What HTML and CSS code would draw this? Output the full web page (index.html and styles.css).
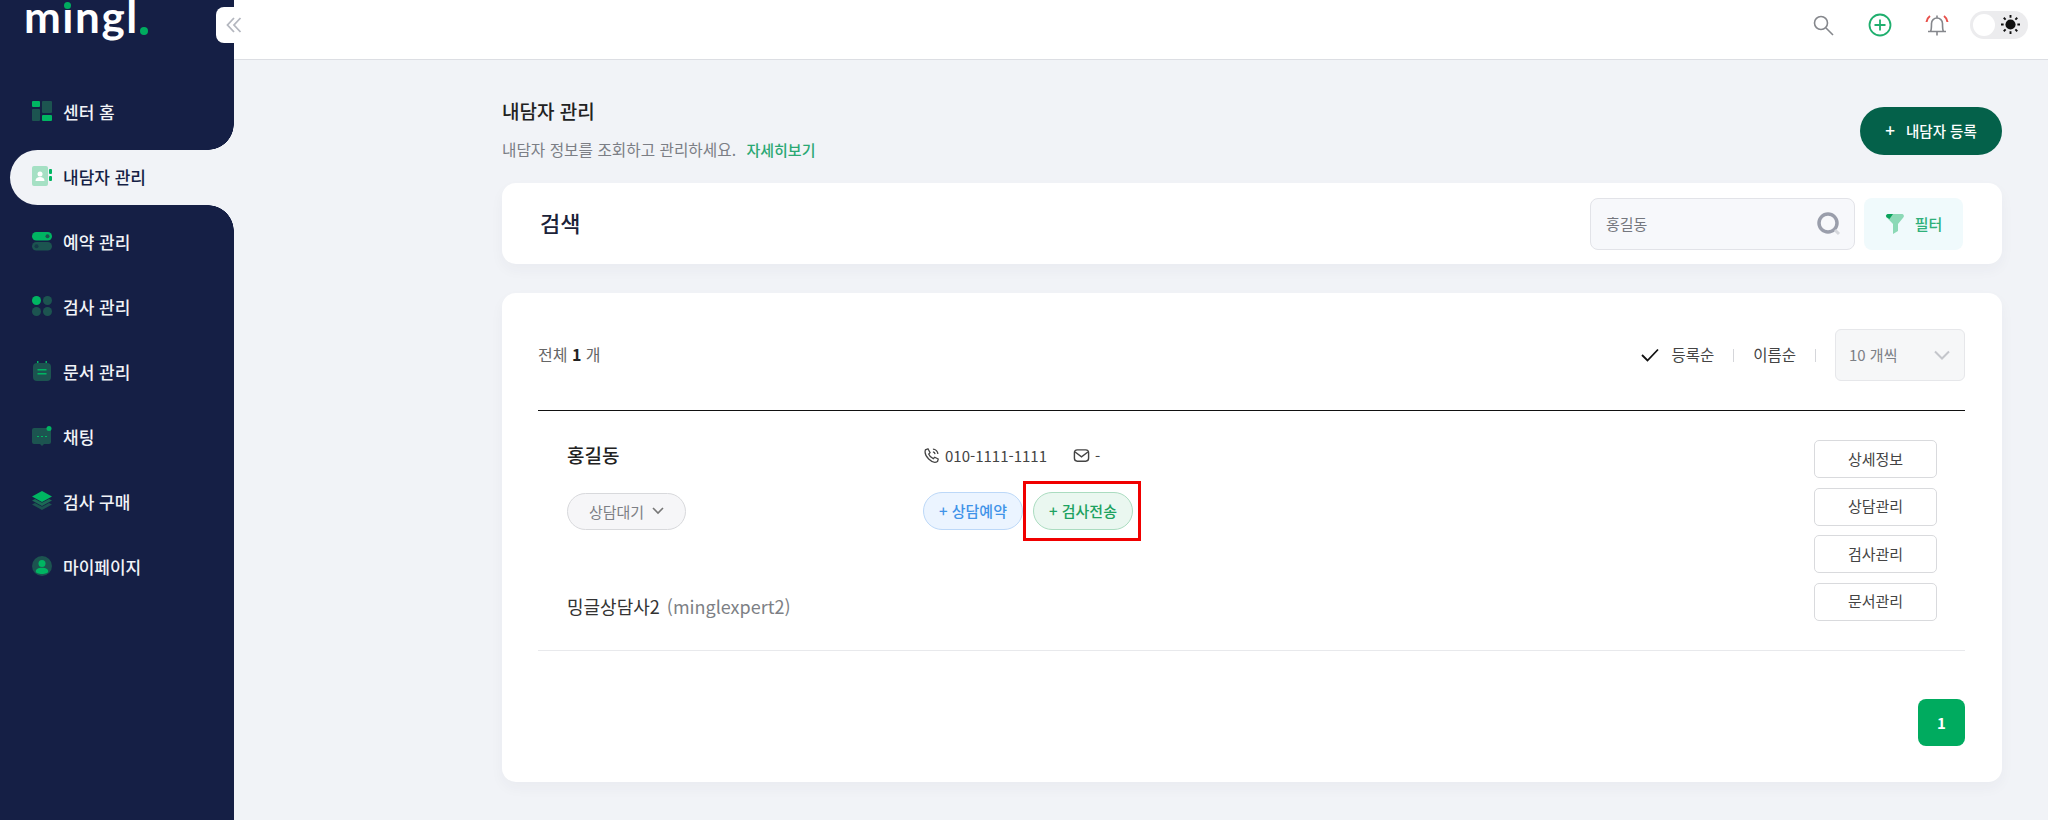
FILE: index.html
```html
<!DOCTYPE html>
<html lang="ko">
<head>
  <meta charset="UTF-8">
  <title>내담자 관리 - mingl</title>
  <link rel="stylesheet" href="styles.css">
</head>
<body>
  <div class="app">
    <aside class="sidebar">
      <div class="logo"><span>m</span><span class="logo-i">ı</span><span>ngl</span><span class="logo-dot"></span></div>
      <button class="collapse" aria-label="메뉴 접기">
        <svg width="18" height="18" viewBox="0 0 18 18" fill="none" stroke="#b4b7bf" stroke-width="1.8"><path d="M9 2 2.500 9 9 16M15.500 2 9 9l6.500 7"/></svg>
      </button>
      <nav class="nav">
        <a class="nav-item">
          <svg class="nav-icon" viewBox="0 0 20 20"><rect x="0" y="0" width="8" height="6" rx="1" fill="#00b562"/><rect x="10" y="0" width="10" height="12" rx="1" fill="#1c5450"/><rect x="0" y="8" width="8" height="12" rx="1" fill="#1c5450"/><rect x="10" y="14" width="10" height="6" rx="1" fill="#00b562"/></svg>
          센터 홈
        </a>
        <a class="nav-item active">
          <svg class="nav-icon" viewBox="0 0 20 20"><rect x="0" y="0" width="16" height="20" rx="2" fill="#a5e0c4"/><circle cx="8" cy="8" r="2.500" fill="#fff"/><path d="M3.500 15c0-3 2-4 4.500-4s4.500 1 4.500 4z" fill="#fff"/><rect x="17" y="3" width="3" height="5" rx="1" fill="#00b562"/><rect x="17" y="10" width="3" height="5" rx="1" fill="#00b562"/></svg>
          내담자 관리
        </a>
        <a class="nav-item">
          <svg class="nav-icon" viewBox="0 0 20 20"><rect x="0" y="1" width="20" height="8.500" rx="4.250" fill="#00b562"/><circle cx="15.500" cy="5.250" r="2" fill="#1c5450"/><rect x="0" y="11" width="20" height="8.500" rx="4.250" fill="#1c5450"/><circle cx="4.500" cy="15.250" r="2" fill="#153a48"/></svg>
          예약 관리
        </a>
        <a class="nav-item">
          <svg class="nav-icon" viewBox="0 0 20 20"><circle cx="4.500" cy="4.500" r="4.500" fill="#00b562"/><circle cx="15.500" cy="4.500" r="4.500" fill="#1c5450"/><circle cx="4.500" cy="15.500" r="4.500" fill="#1c5450"/><circle cx="15.500" cy="15.500" r="4.500" fill="#1c5450"/></svg>
          검사 관리
        </a>
        <a class="nav-item">
          <svg class="nav-icon" viewBox="0 0 20 20"><path d="M5 0h1.500v3H5zM13.500 0H15v3h-1.500z" fill="#00b562"/><rect x="1" y="2" width="18" height="18" rx="4" fill="#1c5450"/><path d="M5.500 8h9v1.500h-9zM5.500 12h9v1.500h-9z" fill="#00b562"/></svg>
          문서 관리
        </a>
        <a class="nav-item">
          <svg class="nav-icon" viewBox="0 0 20 20"><path d="M2 2h15a2 2 0 0 1 2 2v12a2 2 0 0 1-2 2h-5l-2 2-2-2H2a2 2 0 0 1-2-2V4a2 2 0 0 1 2-2z" fill="#1c5450"/><path d="M5 10.500h2M9 10.500h2M13 10.500h2" stroke="#00b562" stroke-width="1"/><circle cx="17" cy="2.500" r="2.500" fill="#00b562"/></svg>
          채팅
        </a>
        <a class="nav-item">
          <svg class="nav-icon" viewBox="0 0 20 20"><path d="M0 13.500 10 19l10-5.500-3-1.600-7 3.800-7-3.800z" fill="#1c5450"/><path d="M0 9.500 10 15l10-5.500-3-1.600-7 3.800-7-3.800z" fill="#1c6a55"/><path d="M10 0 20 5.500 10 11 0 5.500z" fill="#00b562"/></svg>
          검사 구매
        </a>
        <a class="nav-item">
          <svg class="nav-icon" viewBox="0 0 20 20"><circle cx="10" cy="10" r="10" fill="#1c5450"/><circle cx="10" cy="7.500" r="3.500" fill="#00b562"/><path d="M3.800 15.500c0-2.500 2.500-3.700 6.200-3.700s6.200 1.200 6.200 3.700c0 1.500-2.800 2.500-6.200 2.500s-6.200-1-6.200-2.500z" fill="#00b562"/></svg>
          마이페이지
        </a>
      </nav>
    </aside>

    <div class="main">
      <header class="topbar">
        <svg class="top-icon" viewBox="0 0 24 24" fill="none" stroke="#85878c" stroke-width="1.600"><circle cx="10" cy="10" r="6.500"/><path d="m15 15 7 7"/></svg>
        <svg class="top-icon" viewBox="0 0 24 24" fill="none" stroke="#1faf6e" stroke-width="1.800"><circle cx="12" cy="12" r="10.500"/><path d="M12 6.500v11M6.500 12h11"/></svg>
        <svg class="top-icon" viewBox="0 0 24 24" fill="none"><path d="M5.500 18.500c1-1.500 1-3.500 1-8a5.500 5.500 0 0 1 11 0c0 4.500 0 6.500 1 8zM3 18.500h18M12 2.500V5M12 18.500v4" stroke="#85878c" stroke-width="1.600"/><path d="M1.500 9c.3-2.500 1.500-4.500 3.500-6M22.500 9c-.3-2.500-1.500-4.500-3.500-6" stroke="#e8504a" stroke-width="2"/></svg>
        <div class="theme-toggle">
          <span class="toggle-knob"></span>
          <svg width="19" height="19" viewBox="0 0 18 18" stroke="#111" stroke-width="1.800"><circle cx="9" cy="9" r="4.800" fill="#111" stroke="none"/><path d="M9 0v2.500M9 15.500V18M0 9h2.500M15.500 9H18M2.600 2.600l1.800 1.800M13.600 13.600l1.800 1.800M2.600 15.400l1.800-1.800M13.600 4.400l1.800-1.800"/></svg>
        </div>
      </header>

      <main class="content">
        <div class="page-head">
          <div>
            <h1 class="page-title">내담자 관리</h1>
            <p class="page-desc">내담자 정보를 조회하고 관리하세요. <a class="more-link">자세히보기</a></p>
          </div>
          <button class="btn-register"><span class="plus">+</span>내담자 등록</button>
        </div>

        <section class="card search-card">
          <h2 class="search-title">검색</h2>
          <div class="search-tools">
            <div class="search-input">
              <span>홍길동</span>
              <svg width="26" height="26" viewBox="0 0 26 26" fill="none"><circle cx="12" cy="12" r="9" stroke="#9a9eab" stroke-width="3.500"/><path d="m19 19 4 4" stroke="#d5d7dc" stroke-width="3"/></svg>
            </div>
            <button class="btn-filter">
              <svg width="20" height="22" viewBox="0 0 20 22"><path d="M3 1h14a2 2 0 0 1 1.500 3.200L13 11v7l-5 3V11L1.500 4.200A2 2 0 0 1 3 1z" fill="#8cd9b6"/><path d="M3 1h5L4.500 6 1.500 4.200A2 2 0 0 1 3 1z" fill="#0ba35c"/></svg>
              필터
            </button>
          </div>
        </section>

        <section class="card list-card">
          <div class="list-head">
            <div class="total">전체 <b>1</b> 개</div>
            <div class="sort">
              <svg width="18" height="14" viewBox="0 0 18 14" fill="none" stroke="#111" stroke-width="1.800"><path d="m1 7 5.500 5.500L17 1.500"/></svg>
              <span class="sort-on">등록순</span>
              <i class="sort-sep"></i>
              <span>이름순</span>
              <i class="sort-sep"></i>
              <div class="page-size">
                <span>10 개씩</span>
                <svg width="16" height="10" viewBox="0 0 16 10" fill="none" stroke="#c4c6cb" stroke-width="2"><path d="m1 1.500 7 7 7-7"/></svg>
              </div>
            </div>
          </div>

          <div class="client-row">
            <div class="client-info">
              <div class="info-line top-line">
                <div class="col-a client-name">홍길동</div>
                <div class="contact">
                  <svg width="17" height="17" viewBox="0 0 24 24" fill="none" stroke="#444" stroke-width="1.800"><path d="M7 2.500 3.500 4C2 8 4 13 8 17s9 5.500 12.500 3.500l1-3.500-5-2.500-2 2c-2-.7-5.500-4-6.500-6.500l2-2zM14 3a7 7 0 0 1 7 7M14 7a3.500 3.500 0 0 1 3 3"/></svg>
                  <span>010-1111-1111</span>
                  <svg class="mail-icon" width="17" height="15" viewBox="0 0 24 20" fill="none" stroke="#444" stroke-width="2"><rect x="2" y="2" width="20" height="16" rx="4"/><path d="m3 5 9 7 9-7"/></svg>
                  <span>-</span>
                </div>
              </div>
              <div class="info-line">
                <div class="col-a">
                  <button class="status-pill">상담대기
                    <svg width="12" height="8" viewBox="0 0 12 8" fill="none" stroke="#777" stroke-width="1.600"><path d="m1 1 5 5 5-5"/></svg>
                  </button>
                </div>
                <div class="actions">
                  <button class="pill pill-blue">+ 상담예약</button>
                  <button class="pill pill-green">+ 검사전송</button>
                  <span class="highlight"></span>
                </div>
              </div>
              <div class="counselor">밍글상담사2 <span class="counselor-id">(minglexpert2)</span></div>
            </div>
            <div class="row-buttons">
              <button class="btn-line">상세정보</button>
              <button class="btn-line">상담관리</button>
              <button class="btn-line">검사관리</button>
              <button class="btn-line">문서관리</button>
            </div>
          </div>

          <div class="pager"><button class="page-num">1</button></div>
        </section>
      </main>
    </div>
  </div>
</body>
</html>
```

FILE: styles.css
```css
:root {
  --navy: #151f45;
  --page-bg: #f1f3f7;
  --green: #00ab5f;
  --dark-green: #04614a;
  --font-kr: "Noto Sans CJK KR", "Noto Sans", sans-serif;
}

*, *::before, *::after {
  box-sizing: border-box;
}

body {
  margin: 0;
  font-family: var(--font-kr);
  background-color: var(--page-bg);
  color: #222;
}

button {
  font-family: inherit;
  cursor: pointer;
}

.app {
  display: flex;
  height: 820px;
  overflow: hidden;
}

/* Sidebar */
.sidebar {
  position: relative;
  flex: 0 0 234px;
  background-color: var(--navy);
}

.logo {
  display: flex;
  height: 85px;
  padding-left: 24px;
  font-family: "Lato", sans-serif;
  font-size: 44px;
  font-weight: 700;
  line-height: 32px;
  letter-spacing: 1.500px;
  color: #fff;
}
.logo-i {
  position: relative;
}
.logo-i::before {
  content: "";
  position: absolute;
  top: 2px;
  left: 2px;
  width: 7px;
  height: 7px;
  border-radius: 50%;
  background-color: var(--green);
}
.logo-dot {
  width: 8px;
  height: 8px;
  margin: 27px 0 0 1px;
  border-radius: 50%;
  background-color: var(--green);
}

.collapse {
  position: absolute;
  top: 7px;
  left: 216px;
  z-index: 2;
  display: flex;
  align-items: center;
  justify-content: center;
  width: 36px;
  height: 36px;
  padding: 0;
  border: none;
  border-radius: 8px;
  background-color: #fff;
}

.nav {
  display: flex;
  flex-direction: column;
  gap: 10px;
  padding-left: 10px;
}

.nav-item {
  position: relative;
  display: flex;
  align-items: center;
  gap: 11px;
  height: 55px;
  padding-left: 22px;
  padding-bottom: 3px;
  font-size: 17px;
  font-weight: 500;
  color: #f1f3f7;
}
.nav-icon {
  width: 20px;
  height: 20px;
}
.nav-item.active {
  border-radius: 28px 0 0 28px;
  background-color: var(--page-bg);
  color: #151f45;
}
.nav-item.active::before,
.nav-item.active::after {
  content: "";
  position: absolute;
  right: 0;
  width: 26px;
  height: 26px;
}
.nav-item.active::before {
  top: -26px;
  background: radial-gradient(circle at 0 0, transparent 25.5px, var(--page-bg) 26px);
}
.nav-item.active::after {
  bottom: -26px;
  background: radial-gradient(circle at 0 100%, transparent 25.5px, var(--page-bg) 26px);
}

/* Top bar */
.main {
  flex: 1;
  min-width: 0;
}

.topbar {
  display: flex;
  align-items: center;
  justify-content: flex-end;
  gap: 33px;
  height: 60px;
  padding: 0 20px 10px 0;
  border-bottom: 1px solid #dcdee3;
  background-color: #fff;
}
.top-icon {
  width: 24px;
  height: 24px;
}
.theme-toggle {
  display: flex;
  align-items: center;
  justify-content: space-between;
  width: 58px;
  height: 28px;
  margin-left: -12px;
  padding: 0 8px 0 3px;
  border-radius: 14px;
  background-color: #ececee;
}
.toggle-knob {
  width: 22px;
  height: 22px;
  border-radius: 50%;
  background-color: #fff;
}

/* Content */
.content {
  padding: 38px 46px 0 268px;
}

.page-head {
  display: flex;
  align-items: center;
  justify-content: space-between;
  margin-bottom: 23px;
}
.page-title {
  margin: 0 0 16px;
  font-size: 19px;
  font-weight: 500;
  line-height: 26px;
  color: #222;
}
.page-desc {
  height: 20px;
  margin: 0;
  font-size: 15.700px;
  line-height: 20px;
  color: #7b7e85;
}
.more-link {
  margin-left: 6px;
  font-size: 15px;
  font-weight: 500;
  color: #2aa873;
}
.btn-register {
  width: 142px;
  height: 48px;
  margin-top: 3px;
  padding: 0 0 3px;
  border: none;
  border-radius: 24px;
  background-color: var(--dark-green);
  font-size: 14.500px;
  font-weight: 500;
  color: #fff;
}
.plus {
  margin-right: 11px;
  font-size: 17px;
}

.card {
  border-radius: 14px;
  background-color: #fff;
  box-shadow: 0 6px 14px rgba(40, 50, 80, 0.04);
}

.search-card {
  display: flex;
  align-items: center;
  justify-content: space-between;
  height: 81px;
  margin-bottom: 29px;
  padding: 0 39px 0 38px;
}
.search-title {
  margin: 0;
  padding-bottom: 4px;
  font-size: 22px;
  font-weight: 500;
  color: #1b2238;
}
.search-tools {
  display: flex;
  gap: 9px;
}
.search-input {
  display: flex;
  align-items: center;
  justify-content: space-between;
  width: 265px;
  height: 52px;
  padding: 0 12px 0 15px;
  border: 1px solid #e2e3e8;
  border-radius: 8px;
  background-color: #f7f8fb;
  font-size: 15px;
  color: #74777e;
}
.btn-filter {
  display: flex;
  align-items: center;
  justify-content: center;
  gap: 10px;
  width: 99px;
  height: 52px;
  border: none;
  border-radius: 8px;
  background-color: #f0fafc;
  font-size: 15px;
  font-weight: 500;
  color: #2fb07a;
}

.list-card {
  height: 489px;
  padding: 36px 37px 36px 36px;
}
.list-head {
  display: flex;
  align-items: center;
  justify-content: space-between;
  height: 52px;
  margin-bottom: 29px;
}
.total {
  padding-bottom: 3px;
  font-size: 16px;
  color: #666;
}
.total b {
  font-weight: 700;
  color: #222;
}
.sort {
  display: flex;
  align-items: center;
  font-size: 15.500px;
  color: #444;
}
.sort span {
  padding-bottom: 2px;
}
.sort-on {
  margin-left: 12px;
}
.sort-sep {
  width: 1px;
  height: 13px;
  margin: 0 19px;
  background-color: #d5d6da;
}
.page-size {
  display: flex;
  align-items: center;
  justify-content: space-between;
  width: 130px;
  height: 52px;
  padding: 0 14px 0 13px;
  border: 1px solid #e6e7ea;
  border-radius: 6px;
  background-color: #f6f7f8;
  font-size: 15px;
  color: #7d8086;
}

.client-row {
  display: flex;
  justify-content: space-between;
  padding: 29px 28px 29px 29px;
  border-top: 1px solid #111;
  border-bottom: 1px solid #e8e9ec;
}
.info-line {
  display: flex;
  align-items: center;
}
.col-a {
  width: 356px;
}
.top-line {
  height: 32px;
  margin-bottom: 20px;
}
.client-name {
  padding-bottom: 3px;
  font-size: 19px;
  font-weight: 500;
  color: #222;
}
.contact {
  display: flex;
  align-items: center;
  gap: 5px;
  padding-bottom: 2px;
  font-size: 15px;
  color: #444;
}
.mail-icon {
  margin-left: 21px;
}
.status-pill {
  display: flex;
  align-items: center;
  justify-content: center;
  gap: 8px;
  width: 119px;
  height: 37px;
  border: 1px solid #d8d9dc;
  border-radius: 19px;
  background-color: #f6f6f8;
  font-size: 15px;
  color: #7d7f85;
}
.actions {
  position: relative;
  display: flex;
  gap: 10px;
}
.pill {
  width: 100px;
  height: 38px;
  padding: 0 0 2px;
  border-radius: 19px;
  font-size: 15px;
  font-weight: 500;
}
.pill-blue {
  border: 1px solid #bcd8f8;
  background-color: #ebf4ff;
  color: #3f93e8;
}
.pill-green {
  border: 1px solid #aadcc0;
  background-color: #eaf7f0;
  color: #1da261;
}
.highlight {
  position: absolute;
  top: -11px;
  left: 100px;
  width: 118px;
  height: 60px;
  border: 3px solid #f00000;
}
.counselor {
  margin-top: 63px;
  font-size: 18px;
  line-height: 26px;
  color: #333;
}
.counselor-id {
  margin-left: 2px;
  color: #7d7f85;
}
.row-buttons {
  display: flex;
  flex-direction: column;
  gap: 9.500px;
}
.btn-line {
  width: 123px;
  height: 38px;
  padding: 0 0 2px;
  border: 1px solid #d9dadd;
  border-radius: 5px;
  background-color: #fff;
  font-size: 15px;
  color: #444;
}

.pager {
  display: flex;
  justify-content: flex-end;
  margin-top: 48px;
}
.page-num {
  width: 47px;
  height: 47px;
  border: none;
  border-radius: 8px;
  background-color: var(--green);
  font-size: 15px;
  font-weight: 700;
  color: #fff;
}
```
